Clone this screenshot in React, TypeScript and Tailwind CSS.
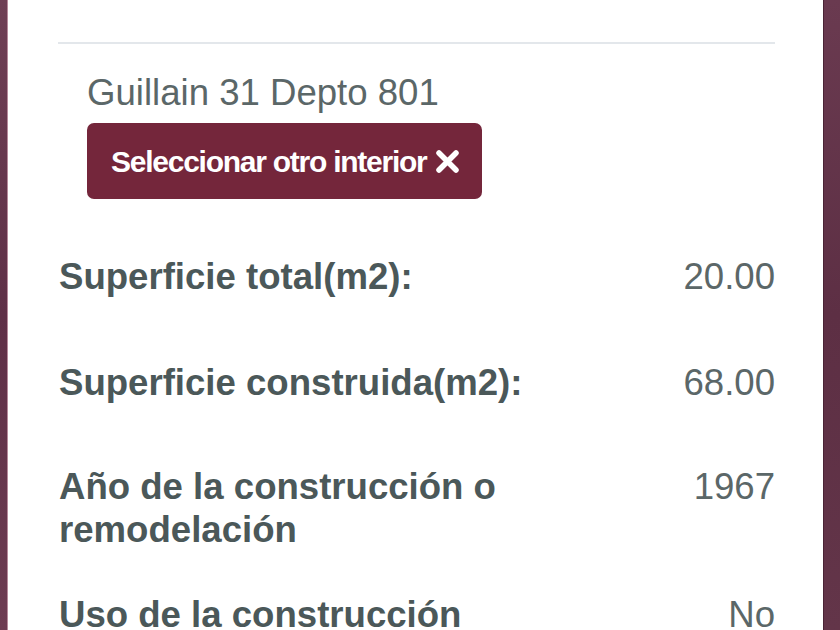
const ROWS = [
  { label: "Superficie total(m2):", value: "20.00", mt: "mt-[56px]" },
  { label: "Superficie construida(m2):", value: "68.00", mt: "mt-[63px]" },
  { label: "Año de la construcción o remodelación", value: "1967", mt: "mt-[61px]" },
  { label: "Uso de la construcción", value: "No", mt: "mt-[42px]" },
];

function CloseIcon() {
  return (
    <svg width="25" height="25" viewBox="0 0 25 25" className="shrink-0">
      <path d="M4 4 L21 21 M21 4 L4 21" stroke="#ffffff" strokeWidth="5.5" strokeLinecap="round" />
    </svg>
  );
}

export default function App() {
  return (
    <div
      className="flex h-[630px] w-[840px] overflow-hidden bg-white"
      style={{ fontFamily: '"Liberation Sans", Arial, sans-serif' }}
    >
      {/* maroon backdrop, left */}
      <div className="w-[8px] shrink-0 bg-gradient-to-b from-[#6f4055] via-[#5f3047] to-[#6d3c52] border-r border-[#b88a9c]" />

      {/* panel */}
      <div className="flex flex-1 flex-col pl-[50px] pr-[48px] pt-[42px]">
        <div className="h-[2px] w-full shrink-0 bg-[#e3e7eb]" />

        <div className="shrink-0 pl-[29px] pt-[27px]">
          <p className="text-[36.6px] leading-[43px] text-[#5b6768]">Guillain 31 Depto 801</p>
          <button
            type="button"
            className="mt-[9px] flex h-[76px] items-center gap-[8px] rounded-[7px] bg-[#74263b] pl-[24px] pr-[22px] text-[30px] font-bold tracking-[-1.25px] text-white"
          >
            Seleccionar otro interior
            <CloseIcon />
          </button>
        </div>

        <div className="flex shrink-0 flex-col">
          {ROWS.map((r) => (
            <div key={r.label} className={`flex shrink-0 items-start ${r.mt}`}>
              <div className="w-[500px] pl-[1px] text-[36.6px] font-bold leading-[43px] text-[#4b5859]">
                {r.label}
              </div>
              <div className="flex-1 text-right text-[36.6px] leading-[43px] text-[#5b6768]">{r.value}</div>
            </div>
          ))}
        </div>
      </div>

      {/* maroon backdrop, right */}
      <div className="w-[17px] shrink-0 bg-gradient-to-b from-[#6a3a50] via-[#5d2f44] to-[#633549] border-l border-[#4a2335]" />
    </div>
  );
}
